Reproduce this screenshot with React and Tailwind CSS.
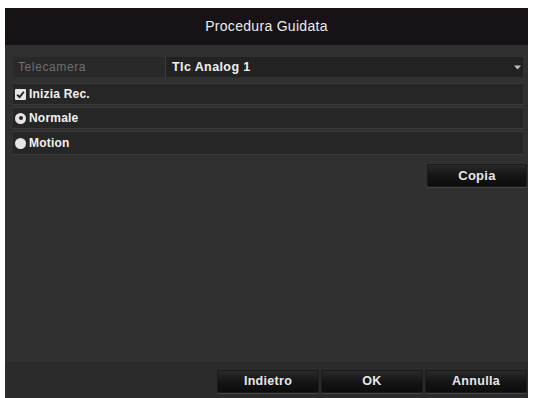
import React from "react";

function Btn({ children, className = "" }) {
  return (
    <button
      className={
        "h-[23px] rounded-[2px] border border-[#1a1a1a] bg-gradient-to-b from-[#2a2a2a] via-[#151515] to-[#0c0c0c] text-[12.5px] font-bold tracking-[0.3px] text-[#e8e8e8] shadow-[0_1px_0_#444] " +
        className
      }
    >
      {children}
    </button>
  );
}

export default function App() {
  return (
    <div className="h-[398px] w-[534px] bg-white pl-[5px] pr-[6px] pt-[8px] font-['Liberation_Sans',Arial,sans-serif]">
      <div className="flex h-[390px] flex-col bg-[#303030]">
        <div className="flex h-[37px] items-center justify-center bg-[#161215] text-[14px] tracking-[0.3px] text-[#ececec]">
          Procedura Guidata
        </div>
        <div className="flex flex-1 flex-col pl-[8px] pr-[5px] pt-[12px]">
          <div className="flex h-[20px] items-center bg-[#222222]">
            <div className="flex h-full w-[153px] items-center border-r border-[#3a3a3a] bg-[#292929] pl-[5px] text-[12px] tracking-[0.6px] text-[#6e6e6e]">
              Telecamera
            </div>
            <div className="flex flex-1 items-center pl-[6px] text-[12.5px] font-bold tracking-[0.4px] text-[#f0f0f0]">
              Tlc Analog 1
            </div>
            <svg width="7" height="5" viewBox="0 0 7 5" className="mr-[2px]">
              <path d="M0 0.5 L7 0.5 L3.5 4.5 Z" fill="#bdbdbd" />
            </svg>
          </div>
          <div className="mt-[6px] flex flex-col gap-[2px]">
            <div className="flex h-[22px] items-center gap-[3px] border-y border-[#383838] bg-[#262626] pl-[2px] text-[12px] font-bold tracking-[0.2px] text-[#f0f0f0]">
              <span className="flex h-[11px] w-[11px] items-center justify-center rounded-[1px] bg-[#e6e6e6]">
                <svg width="9" height="9" viewBox="0 0 8 8">
                  <path d="M1 4.2 L3.2 6.3 L7 1.5" stroke="#222" strokeWidth="1.6" fill="none" />
                </svg>
              </span>
              Inizia Rec.
            </div>
            <div className="flex h-[22px] items-center gap-[3px] border-y border-[#383838] bg-[#262626] pl-[2px] text-[12px] font-bold tracking-[0.2px] text-[#f0f0f0]">
              <span className="flex h-[11px] w-[11px] items-center justify-center rounded-full bg-[#e6e6e6]">
                <span className="h-[4px] w-[4px] rounded-full bg-[#262626]" />
              </span>
              Normale
            </div>
            <div className="flex h-[24px] items-center gap-[3px] border-y border-[#383838] bg-[#262626] pl-[2px] text-[12px] font-bold tracking-[0.2px] text-[#f0f0f0]">
              <span className="h-[11px] w-[11px] rounded-full bg-[#e6e6e6]" />
              Motion
            </div>
          </div>
          <div className="mt-[9px] flex justify-end">
            <Btn className="mr-[-4px] w-[100px] text-[13px]">Copia</Btn>
          </div>
          <div className="flex-1" />
          <div className="-ml-[8px] -mr-[5px] flex h-[36px] items-start justify-end gap-[2px] bg-[#2b2b2b] pr-[1px] pt-[8px]">
            <Btn className="w-[102px]">Indietro</Btn>
            <Btn className="w-[102px]">OK</Btn>
            <Btn className="w-[102px]">Annulla</Btn>
          </div>
        </div>
      </div>
    </div>
  );
}
